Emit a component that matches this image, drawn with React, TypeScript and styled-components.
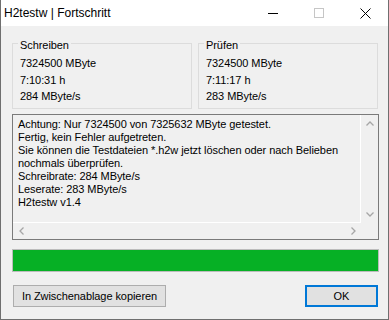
import React from "react";
import styled, { createGlobalStyle } from "styled-components";

const GlobalStyle = createGlobalStyle`
  html, body {
    margin: 0;
    padding: 0;
    background: #ffffff;
  }
  * {
    box-sizing: border-box;
  }
`;

const uiFont = `"Liberation Sans", Arial, sans-serif`;

const Window = styled.div`
  width: 389px;
  height: 320px;
  display: flex;
  flex-direction: column;
  border-left: 1px solid #6f6f6f;
  border-right: 1px solid #6f6f6f;
  border-bottom: 1px solid #6f6f6f;
  font-family: ${uiFont};
  font-size: 11px;
  letter-spacing: -0.07px;
  color: #000;
  overflow: hidden;
`;

const TitleBar = styled.div`
  height: 26px;
  flex: none;
  display: flex;
  align-items: center;
  background: #ffffff;
`;

const Title = styled.div`
  flex: 1;
  padding-left: 3px;
  font-size: 12px;
  letter-spacing: 0;
  line-height: 26px;
`;

const CaptionButton = styled.div`
  width: 46px;
  height: 26px;
  display: flex;
  align-items: center;
  justify-content: center;
`;

const Content = styled.div`
  flex: 1;
  background: #f0f0f0;
  padding: 8px 9px 0 11px;
  display: flex;
  flex-direction: column;
`;

const GroupRow = styled.div`
  display: flex;
  gap: 6px;
`;

const Group = styled.fieldset`
  width: 180px;
  margin: 0;
  padding: 0 7px 3.5px;
  min-width: 0;
  border: 1px solid #dcdcdc;
`;

const Legend = styled.legend`
  margin-left: -2px;
  padding: 4px 2px 0;
  line-height: 14px;
`;

const Value = styled.div`
  line-height: 16.5px;
  white-space: nowrap;
  &:first-of-type {
    margin-top: 3px;
  }
`;

const LogBox = styled.div`
  margin-top: 5px;
  height: 126px;
  border: 1px solid #7a7a7a;
  display: grid;
  grid-template-columns: 1fr 17px;
  grid-template-rows: 1fr 16px;
`;

const LogText = styled.div`
  padding: 3px 5px;
  border-right: 1px solid #ffffff;
  border-bottom: 1px solid #ffffff;
  overflow: hidden;
  white-space: nowrap;
`;

const LogLine = styled.div`
  line-height: 13px;
`;

const ScrollBar = styled.div<{ $vertical?: boolean }>`
  display: flex;
  flex-direction: ${(p) => (p.$vertical ? "column" : "row")};
  justify-content: space-between;
`;

const ArrowButton = styled.div<{ $vertical?: boolean }>`
  width: ${(p) => (p.$vertical ? "17px" : "16px")};
  height: ${(p) => (p.$vertical ? "17px" : "16px")};
  display: flex;
  align-items: center;
  justify-content: center;
`;

const Corner = styled.div`
  background: #f0f0f0;
`;

const Progress = styled.div`
  margin-top: 9px;
  height: 23px;
  border: 1px solid #bcbcbc;
  background: #e6e6e6;
`;

const ProgressFill = styled.div`
  height: 100%;
  background: #06b025;
`;

const ButtonRow = styled.div`
  margin-top: 13px;
  padding: 0 1px;
  display: flex;
  justify-content: space-between;
`;

const Button = styled.div<{ $primary?: boolean }>`
  height: 22px;
  width: ${(p) => (p.$primary ? "73px" : "153px")};
  background: #e1e1e1;
  border: ${(p) => (p.$primary ? "2px solid #0078d7" : "1px solid #adadad")};
  display: flex;
  align-items: center;
  justify-content: center;
  line-height: 13px;
`;

type Dir = "up" | "down" | "left" | "right";

const chevronPoints: Record<Dir, string> = {
  up: "0.5,4.5 4,1 7.5,4.5",
  down: "0.5,0.5 4,4 7.5,0.5",
  left: "4.5,0.5 1,4 4.5,7.5",
  right: "0.5,0.5 4,4 0.5,7.5",
};

const Chevron = ({ dir }: { dir: Dir }) => {
  const vertical = dir === "up" || dir === "down";
  return (
    <svg
      width={vertical ? 8 : 5}
      height={vertical ? 5 : 8}
      viewBox={vertical ? "0 0 8 5" : "0 0 5 8"}
    >
      <polyline
        points={chevronPoints[dir]}
        fill="none"
        stroke="#a6a6a6"
        strokeWidth="1.3"
      />
    </svg>
  );
};

const logLines = [
  "Achtung: Nur 7324500 von 7325632 MByte getestet.",
  "Fertig, kein Fehler aufgetreten.",
  "Sie können die Testdateien *.h2w jetzt löschen oder nach Belieben",
  "nochmals überprüfen.",
  "Schreibrate: 284 MByte/s",
  "Leserate: 283 MByte/s",
  "H2testw v1.4",
];

const groups = [
  { title: "Schreiben", values: ["7324500 MByte", "7:10:31 h", "284 MByte/s"] },
  { title: "Prüfen", values: ["7324500 MByte", "7:11:17 h", "283 MByte/s"] },
];

const App = () => {
  return (
    <>
      <GlobalStyle />
      <Window>
        <TitleBar>
          <Title>H2testw | Fortschritt</Title>
          <CaptionButton>
            <svg width="10" height="10" viewBox="0 0 10 10">
              <line x1="0" y1="5.5" x2="10" y2="5.5" stroke="#000" strokeWidth="1" />
            </svg>
          </CaptionButton>
          <CaptionButton>
            <svg width="10" height="10" viewBox="0 0 10 10">
              <rect x="0.5" y="0.5" width="9" height="9" fill="none" stroke="#c6c6c6" strokeWidth="1" />
            </svg>
          </CaptionButton>
          <CaptionButton>
            <svg width="11" height="11" viewBox="0 0 11 11">
              <path d="M0.5 0.5 L10.5 10.5 M10.5 0.5 L0.5 10.5" stroke="#000" strokeWidth="1" />
            </svg>
          </CaptionButton>
        </TitleBar>
        <Content>
          <GroupRow>
            {groups.map((g) => (
              <Group key={g.title}>
                <Legend>{g.title}</Legend>
                {g.values.map((v) => (
                  <Value key={v}>{v}</Value>
                ))}
              </Group>
            ))}
          </GroupRow>
          <LogBox>
            <LogText>
              {logLines.map((l) => (
                <LogLine key={l}>{l}</LogLine>
              ))}
            </LogText>
            <ScrollBar $vertical>
              <ArrowButton $vertical>
                <Chevron dir="up" />
              </ArrowButton>
              <ArrowButton $vertical>
                <Chevron dir="down" />
              </ArrowButton>
            </ScrollBar>
            <ScrollBar>
              <ArrowButton>
                <Chevron dir="left" />
              </ArrowButton>
              <ArrowButton>
                <Chevron dir="right" />
              </ArrowButton>
            </ScrollBar>
            <Corner />
          </LogBox>
          <Progress>
            <ProgressFill style={{ width: "100%" }} />
          </Progress>
          <ButtonRow>
            <Button>In Zwischenablage kopieren</Button>
            <Button $primary>OK</Button>
          </ButtonRow>
        </Content>
      </Window>
    </>
  );
};

export default App;
